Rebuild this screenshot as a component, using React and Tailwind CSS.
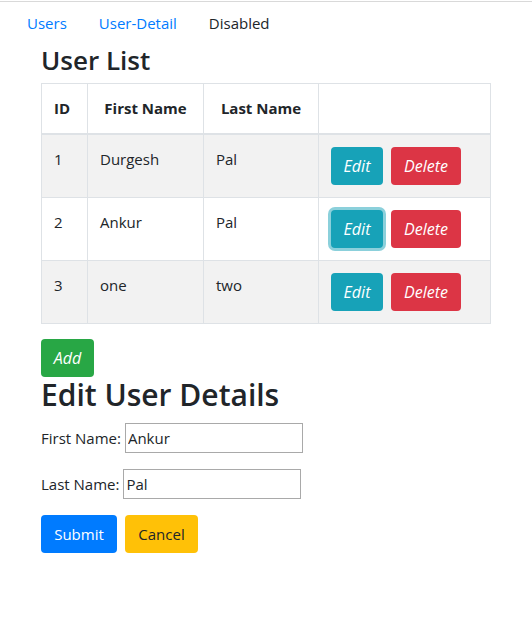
const users = [
  { id: 1, first: "Durgesh", last: "Pal" },
  { id: 2, first: "Ankur", last: "Pal", focused: true },
  { id: 3, first: "one", last: "two" },
];

export default function App() {
  return (
    <div className="min-h-[624px] bg-white text-[#212529] text-[15px] leading-6 font-['Open_Sans',sans-serif]">
      <div className="pt-[1px]">
        <div className="border-t border-[#d9d9d9]" />
      </div>

      <ul className="flex pl-[11px] h-[40px] pt-[1px] items-center">
        <li className="px-4 text-[#007bff]">Users</li>
        <li className="px-4 text-[#007bff]">User-Detail</li>
        <li className="px-4 text-[#212529]">Disabled</li>
      </ul>

      <div className="pl-[41px]">
        <h2 className="text-[26px] font-semibold leading-[38px] mt-[-1px] mb-[4px]">User List</h2>

        <table className="w-[450px] border-collapse border border-[#dee2e6]">
          <thead>
            <tr className="h-[50px] border-b-2 border-[#dee2e6]">
              <th className="w-[46px] border border-[#dee2e6] px-3 text-left font-bold">ID</th>
              <th className="w-[116px] border border-[#dee2e6] px-3 text-center font-bold">First Name</th>
              <th className="w-[115px] border border-[#dee2e6] px-3 text-center font-bold">Last Name</th>
              <th className="border border-[#dee2e6]"></th>
            </tr>
          </thead>
          <tbody>
            {users.map((u, i) => (
              <tr key={u.id} className={i % 2 === 0 ? "bg-[#f2f2f2]" : "bg-white"}>
                <td className="border border-[#dee2e6] p-3 align-top">{u.id}</td>
                <td className="border border-[#dee2e6] p-3 align-top">{u.first}</td>
                <td className="border border-[#dee2e6] p-3 align-top">{u.last}</td>
                <td className="border border-[#dee2e6] p-3 align-top">
                  <div className="flex gap-2">
                    <button
                      className={
                        "h-[38px] w-[52px] rounded bg-[#17a2b8] text-white italic text-[16px]" +
                        (u.focused ? " shadow-[0_0_0_3px_rgba(23,162,184,0.5)]" : "")
                      }
                    >
                      Edit
                    </button>
                    <button className="h-[38px] w-[70px] rounded bg-[#dc3545] text-white italic text-[16px]">
                      Delete
                    </button>
                  </div>
                </td>
              </tr>
            ))}
          </tbody>
        </table>

        <button className="mt-[15px] h-[38px] w-[53px] rounded bg-[#28a745] text-white italic text-[16px]">
          Add
        </button>

        <h1 className="text-[30px] font-semibold leading-[38px] mt-[-1px]">Edit User Details</h1>

        <div className="mt-[9px] flex items-center h-[30px]">
          <label>First Name:</label>
          <input
            defaultValue="Ankur"
            className="ml-[4px] w-[178px] h-[30px] border border-[#a9a9a9] px-[2px] outline-none"
          />
        </div>

        <div className="mt-[16px] flex items-center h-[30px]">
          <label>Last Name:</label>
          <input
            defaultValue="Pal"
            className="ml-[4px] w-[178px] h-[30px] border border-[#a9a9a9] px-[2px] outline-none"
          />
        </div>

        <div className="mt-[16px] flex gap-2">
          <button className="h-[38px] w-[76px] rounded bg-[#007bff] text-white">Submit</button>
          <button className="h-[38px] w-[73px] rounded bg-[#ffc107] text-[#212529]">Cancel</button>
        </div>
      </div>
    </div>
  );
}
